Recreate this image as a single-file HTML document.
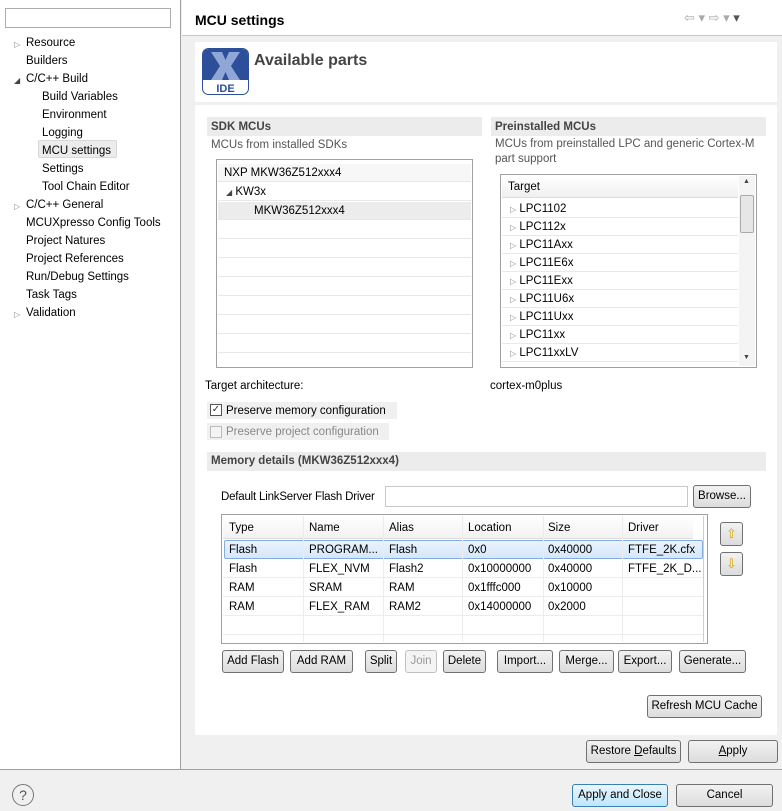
<!DOCTYPE html>
<html><head><meta charset="utf-8"><style>
*{box-sizing:border-box;margin:0;padding:0}
body{width:782px;height:811px;background:#f0f0f0;font-family:"Liberation Sans",sans-serif;font-size:11.5px;color:#000;position:relative;overflow:hidden}
.a{position:absolute;white-space:nowrap;line-height:16px}
.btn{position:absolute;height:23px;border:1px solid #707070;border-radius:3px;background:linear-gradient(#f2f2f2,#dcdcdc);text-align:center;line-height:21px;font-size:11.5px}
.tri{color:#888;font-size:8px}
.row{position:absolute;height:18px;border-bottom:1px solid #e8e8e8;line-height:18px}
.rl{position:absolute;left:223px;width:480px;height:1px;background:#ececec}
.cl{position:absolute;top:516px;width:1px;height:126px;background:#ececec}
.t{position:absolute;white-space:nowrap;line-height:16px}
</style></head><body>
<div class="a" style="left:0;top:0;width:181px;height:769px;background:#fff;border-right:1px solid #a0a0a0"></div>
<div class="a" style="left:5px;top:8px;width:166px;height:20px;border:1px solid #abadb3;background:#fff"></div>
<div class="a tri" style="left:14px;top:37px">▷</div><div class="a" style="left:26px;top:35px">Resource</div>
<div class="a" style="left:26px;top:53px">Builders</div>
<div class="a tri" style="left:14px;top:73px;color:#444">◢</div><div class="a" style="left:26px;top:71px">C/C++ Build</div>
<div class="a" style="left:42px;top:89px">Build Variables</div>
<div class="a" style="left:42px;top:107px">Environment</div>
<div class="a" style="left:42px;top:125px">Logging</div>
<div class="a" style="left:38px;top:140px;width:79px;height:18px;background:#ececec;border:1px solid #d8d8d8;border-radius:2px"></div>
<div class="a" style="left:42px;top:143px">MCU settings</div>
<div class="a" style="left:42px;top:161px">Settings</div>
<div class="a" style="left:42px;top:179px">Tool Chain Editor</div>
<div class="a tri" style="left:14px;top:199px">▷</div><div class="a" style="left:26px;top:197px">C/C++ General</div>
<div class="a" style="left:26px;top:215px">MCUXpresso Config Tools</div>
<div class="a" style="left:26px;top:233px">Project Natures</div>
<div class="a" style="left:26px;top:251px">Project References</div>
<div class="a" style="left:26px;top:269px">Run/Debug Settings</div>
<div class="a" style="left:26px;top:287px">Task Tags</div>
<div class="a tri" style="left:14px;top:307px">▷</div><div class="a" style="left:26px;top:305px">Validation</div>
<div class="a" style="left:182px;top:0;width:600px;height:36px;background:#fff;border-bottom:1px solid #c8c8c8"></div>
<div class="a" style="left:195px;top:11px;font-weight:bold;font-size:14px;line-height:18px">MCU settings</div>
<div class="a" style="left:684px;top:10px;color:#aaa;font-size:13px">⇦ ▾ ⇨ ▾ <span style="color:#555">▾</span></div>
<div class="a" style="left:195px;top:42px;width:582px;height:693px;background:#fff"></div>
<div class="a" style="left:195px;top:102px;width:582px;height:3px;background:#f0f0f0"></div>
<svg class="a" style="left:202px;top:48px" width="47" height="47" viewBox="0 0 47 47"><rect x="0.5" y="0.5" width="46" height="46" rx="6" fill="#fff" stroke="#2d4f9a"/><path d="M1 7 Q1 1 7 1 H40 Q46 1 46 7 V32 H1Z" fill="#2d4f9a"/><path d="M9 4 H20 L23.5 12 L27 4 H38 L29 18 L38 32 H27 L23.5 24 L20 32 H9 L18 18Z" fill="#8fa6d6"/><text x="23.5" y="44" text-anchor="middle" font-family="Liberation Sans" font-weight="bold" font-size="11" fill="#2d4f9a">IDE</text></svg>
<div class="a" style="left:254px;top:51px;font-weight:bold;font-size:16px;color:#444;line-height:20px">Available parts</div>
<div class="a" style="left:207px;top:117px;width:275px;height:19px;background:#ececec"></div>
<div class="a" style="left:211px;top:119px;font-weight:bold;color:#444">SDK MCUs</div>
<div class="a" style="left:211px;top:137px;color:#555">MCUs from installed SDKs</div>
<div class="a" style="left:216px;top:159px;width:257px;height:209px;border:1px solid #a0a0a0;background:#fff"></div>
<div class="row" style="left:218px;top:164px;width:253px;background:#f7f7f7"><span style="padding-left:6px">NXP MKW36Z512xxx4</span></div>
<div class="row" style="left:218px;top:183px;width:253px"><span class="tri" style="padding-left:8px;color:#444">◢</span> KW3x</div>
<div class="row" style="left:218px;top:202px;width:253px;background:#ececec"><span style="padding-left:36px">MKW36Z512xxx4</span></div>
<div class="row" style="left:218px;top:221px;width:253px"></div><div class="row" style="left:218px;top:240px;width:253px"></div><div class="row" style="left:218px;top:259px;width:253px"></div><div class="row" style="left:218px;top:278px;width:253px"></div><div class="row" style="left:218px;top:297px;width:253px"></div><div class="row" style="left:218px;top:316px;width:253px"></div><div class="row" style="left:218px;top:335px;width:253px"></div>
<div class="a" style="left:491px;top:117px;width:275px;height:19px;background:#ececec"></div>
<div class="a" style="left:495px;top:119px;font-weight:bold;color:#444">Preinstalled MCUs</div>
<div class="a" style="left:495px;top:137px;color:#555;line-height:15px">MCUs from preinstalled LPC and generic Cortex-M<br>part support</div>
<div class="a" style="left:500px;top:174px;width:257px;height:194px;border:1px solid #a0a0a0;background:#fff"></div>
<div class="a" style="left:502px;top:176px;width:236px;height:22px;background:linear-gradient(#fff,#f0f0f0);border-bottom:1px solid #ddd;padding:3px 6px">Target</div>
<div class="a" style="left:739px;top:176px;width:16px;height:190px;background:#f4f4f4"></div>
<div class="a" style="left:740px;top:195px;width:14px;height:38px;border:1px solid #aaa;border-radius:2px;background:#e6e6e6"></div>
<div class="a" style="left:743px;top:178px;font-size:7px;color:#444;line-height:8px">▲</div>
<div class="a" style="left:743px;top:354px;font-size:7px;color:#444;line-height:8px">▼</div>
<div class="row" style="left:502px;top:200px;width:236px"><span class="tri" style="padding-left:8px">▷</span> LPC1102</div>
<div class="row" style="left:502px;top:218px;width:236px"><span class="tri" style="padding-left:8px">▷</span> LPC112x</div>
<div class="row" style="left:502px;top:236px;width:236px"><span class="tri" style="padding-left:8px">▷</span> LPC11Axx</div>
<div class="row" style="left:502px;top:254px;width:236px"><span class="tri" style="padding-left:8px">▷</span> LPC11E6x</div>
<div class="row" style="left:502px;top:272px;width:236px"><span class="tri" style="padding-left:8px">▷</span> LPC11Exx</div>
<div class="row" style="left:502px;top:290px;width:236px"><span class="tri" style="padding-left:8px">▷</span> LPC11U6x</div>
<div class="row" style="left:502px;top:308px;width:236px"><span class="tri" style="padding-left:8px">▷</span> LPC11Uxx</div>
<div class="row" style="left:502px;top:326px;width:236px"><span class="tri" style="padding-left:8px">▷</span> LPC11xx</div>
<div class="row" style="left:502px;top:344px;width:236px"><span class="tri" style="padding-left:8px">▷</span> LPC11xxLV</div>
<div class="a" style="left:205px;top:378px">Target architecture:</div>
<div class="a" style="left:490px;top:378px">cortex-m0plus</div>
<div class="a" style="left:207px;top:402px;width:190px;height:17px;background:#f0f0f0"></div>
<div class="a" style="left:210px;top:404px;width:12px;height:12px;border:1px solid #555;background:#fff;font-size:10px;line-height:10px;text-align:center;color:#333">✓</div>
<div class="a" style="left:226px;top:403px">Preserve memory configuration</div>
<div class="a" style="left:207px;top:423px;width:182px;height:17px;background:#f0f0f0"></div>
<div class="a" style="left:210px;top:426px;width:12px;height:12px;border:1px solid #bbb;background:#f4f4f4"></div>
<div class="a" style="left:226px;top:424px;color:#888">Preserve project configuration</div>
<div class="a" style="left:207px;top:452px;width:559px;height:19px;background:#ececec"></div>
<div class="a" style="left:211px;top:453px;font-weight:bold;color:#444">Memory details (MKW36Z512xxx4)</div>
<div class="a" style="left:221px;top:489px;letter-spacing:-0.2px">Default LinkServer Flash Driver</div>
<div class="a" style="left:385px;top:486px;width:303px;height:21px;border:1px solid #c8c8c8;background:#fff"></div>
<div class="btn" style="left:693px;top:485px;width:58px">Browse...</div>
<div class="a" style="left:221px;top:514px;width:487px;height:130px;border:1px solid #a0a0a0;background:#fff"></div>
<div class="a" style="left:223px;top:516px;width:470px;height:23px;background:linear-gradient(#fff,#f2f2f2);border-bottom:1px solid #ddd"></div>
<div class="a" style="left:224px;top:540px;width:479px;height:19px;background:linear-gradient(#eaf3fd,#d5e7fb);border:1px solid #84acdd;border-radius:2px"></div>
<div class="rl" style="top:577px"></div><div class="rl" style="top:596px"></div><div class="rl" style="top:615px"></div><div class="rl" style="top:634px"></div>
<div class="cl" style="left:303px"></div><div class="cl" style="left:383px"></div><div class="cl" style="left:462px"></div><div class="cl" style="left:543px"></div><div class="cl" style="left:622px"></div><div class="cl" style="left:703px;background:#bcd3ee"></div>
<div class="t" style="left:229px;top:520px">Type</div><div class="t" style="left:309px;top:520px">Name</div><div class="t" style="left:389px;top:520px">Alias</div><div class="t" style="left:468px;top:520px">Location</div><div class="t" style="left:548px;top:520px">Size</div><div class="t" style="left:628px;top:520px">Driver</div>
<div class="t" style="left:229px;top:542px">Flash</div><div class="t" style="left:309px;top:542px">PROGRAM...</div><div class="t" style="left:389px;top:542px">Flash</div><div class="t" style="left:468px;top:542px">0x0</div><div class="t" style="left:548px;top:542px">0x40000</div><div class="t" style="left:628px;top:542px">FTFE_2K.cfx</div>
<div class="t" style="left:229px;top:561px">Flash</div><div class="t" style="left:309px;top:561px">FLEX_NVM</div><div class="t" style="left:389px;top:561px">Flash2</div><div class="t" style="left:468px;top:561px">0x10000000</div><div class="t" style="left:548px;top:561px">0x40000</div><div class="t" style="left:628px;top:561px">FTFE_2K_D...</div>
<div class="t" style="left:229px;top:580px">RAM</div><div class="t" style="left:309px;top:580px">SRAM</div><div class="t" style="left:389px;top:580px">RAM</div><div class="t" style="left:468px;top:580px">0x1fffc000</div><div class="t" style="left:548px;top:580px">0x10000</div>
<div class="t" style="left:229px;top:599px">RAM</div><div class="t" style="left:309px;top:599px">FLEX_RAM</div><div class="t" style="left:389px;top:599px">RAM2</div><div class="t" style="left:468px;top:599px">0x14000000</div><div class="t" style="left:548px;top:599px">0x2000</div>
<div class="btn" style="left:720px;top:522px;width:23px;height:24px;color:#d8a800;font-size:13px;line-height:22px">⇧</div>
<div class="btn" style="left:720px;top:552px;width:23px;height:24px;color:#d8a800;font-size:13px;line-height:22px">⇩</div>
<div class="btn" style="left:222px;top:650px;width:62px">Add Flash</div>
<div class="btn" style="left:290px;top:650px;width:63px">Add RAM</div>
<div class="btn" style="left:365px;top:650px;width:32px">Split</div>
<div class="btn" style="left:405px;top:650px;width:32px;color:#999;border-color:#c0c0c0;background:#f4f4f4">Join</div>
<div class="btn" style="left:443px;top:650px;width:43px">Delete</div>
<div class="btn" style="left:497px;top:650px;width:56px">Import...</div>
<div class="btn" style="left:559px;top:650px;width:55px">Merge...</div>
<div class="btn" style="left:618px;top:650px;width:54px">Export...</div>
<div class="btn" style="left:679px;top:650px;width:67px">Generate...</div>
<div class="btn" style="left:647px;top:695px;width:115px">Refresh MCU Cache</div>
<div class="btn" style="left:586px;top:740px;width:95px">Restore <u>D</u>efaults</div>
<div class="btn" style="left:688px;top:740px;width:90px"><u>A</u>pply</div>
<div class="a" style="left:0;top:769px;width:782px;height:1px;background:#a0a0a0"></div>
<div class="a" style="left:12px;top:784px;width:22px;height:22px;border:1px solid #777;border-radius:50%;text-align:center;line-height:20px;color:#555;font-size:14px">?</div>
<div class="btn" style="left:572px;top:784px;width:96px;border-color:#3c7fb1;background:linear-gradient(#eaf6fd,#bee6fd)">Apply and Close</div>
<div class="btn" style="left:676px;top:784px;width:97px">Cancel</div>
</body></html>
